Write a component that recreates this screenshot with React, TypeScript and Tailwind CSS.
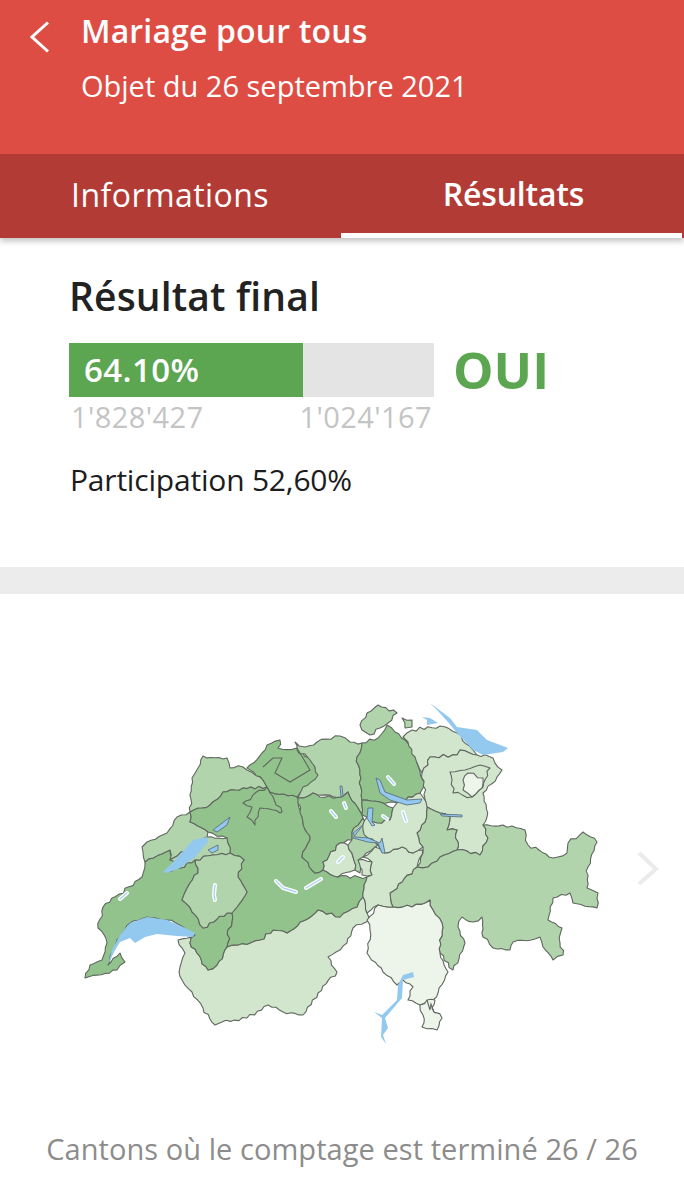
const DARK = '#93c38d';
const MID = '#b2d4ac';
const LIGHT = '#d2e6cd';
const PALE = '#edf4ea';
const LAKE = '#93c9ee';

type Pt = [number, number];

// deterministic wobble so the shared borders of two cantons stay on top of each other
const wobble = (a: number, b: number, i: number) => {
    const v = Math.sin(a * 12.9898 + b * 78.233 + i * 37.719) * 43758.5453;
    return (v - Math.floor(v) - 0.5) * 3.4;
};

const rough = (pts: Pt[]) => {
    const out: string[] = [];
    pts.forEach((p, idx) => {
        const q = pts[(idx + 1) % pts.length];
        out.push(`${p[0]},${p[1]}`);
        const swap = p[0] > q[0] || (p[0] === q[0] && p[1] > q[1]);
        const [s, e] = swap ? [q, p] : [p, q];
        const dx = e[0] - s[0];
        const dy = e[1] - s[1];
        const len = Math.hypot(dx, dy);
        const steps = Math.floor(len / 4);
        const mids: string[] = [];
        for (let i = 1; i < steps; i++) {
            const t = i / steps;
            const w = wobble(s[0] + s[1], e[0] + e[1], i);
            mids.push(`${(s[0] + dx * t - (dy / len) * w).toFixed(1)},${(s[1] + dy * t + (dx / len) * w).toFixed(1)}`);
        }
        out.push(...(swap ? mids.reverse() : mids));
    });
    return out.join(' ');
};

const cantons: { fill: string; pts: Pt[] }[] = [
    // Valais
    { fill: LIGHT, pts: [[178,940],[195,935],[190,943],[208,970],[217,965],[227,947],[238,945],[260,940],[273,930],[287,933],[318,910],[340,917],[357,907],[363,897],[367,913],[370,920],[353,928],[347,943],[328,957],[337,972],[318,993],[303,1015],[283,1012],[268,1005],[247,1018],[222,1022],[215,1025],[203,1008],[192,992],[182,980],[180,967],[185,953]] },
    // Vaud + Geneve
    { fill: DARK, pts: [[98,928],[103,907],[142,877],[145,862],[170,850],[175,862],[167,872],[180,868],[195,860],[198,873],[190,883],[182,900],[192,912],[203,928],[227,913],[232,913],[227,947],[217,965],[208,970],[190,943],[195,935],[183,927],[167,920],[147,917],[130,923],[117,940],[108,965],[120,953],[125,962],[117,970],[85,978],[90,965],[102,960],[107,943]] },
    // Neuchatel
    { fill: MID, pts: [[142,847],[147,842],[167,833],[177,817],[190,812],[190,822],[208,832],[207,837],[170,860],[170,850],[145,862]] },
    // Jura
    { fill: MID, pts: [[192,778],[198,768],[203,756],[227,758],[230,768],[243,767],[263,780],[267,787],[243,788],[223,792],[210,805],[190,812]] },
    // Berne
    { fill: DARK, pts: [[190,812],[210,805],[223,792],[243,788],[267,787],[270,792],[297,797],[302,817],[310,840],[302,857],[315,873],[323,870],[338,877],[367,877],[363,897],[357,907],[340,917],[318,910],[287,933],[273,930],[260,940],[238,945],[227,947],[232,913],[237,907],[247,892],[238,877],[244,860],[230,853],[227,838],[208,832],[190,822]] },
    // Broye, between the lakes
    { fill: MID, pts: [[207,837],[227,838],[230,853],[213,855],[195,860],[180,868],[170,860]] },
    // Fribourg
    { fill: MID, pts: [[182,900],[190,883],[198,873],[195,860],[213,855],[230,853],[244,860],[238,877],[247,892],[237,907],[232,913],[227,913],[203,928],[192,912]] },
    // Bale + Soleure
    { fill: DARK, pts: [[247,768],[262,753],[267,745],[280,740],[278,748],[297,748],[303,752],[318,772],[318,778],[300,793],[297,797],[270,792],[267,787],[263,780]] },
    { fill: DARK, pts: [[267,787],[243,803],[252,807],[247,817],[255,825],[260,808],[280,813],[282,812],[270,793]] },
    // Argovie
    { fill: MID, pts: [[295,742],[305,747],[317,742],[340,736],[350,742],[362,743],[357,757],[362,800],[362,815],[348,792],[342,797],[313,793],[298,798],[303,787],[318,775],[310,760],[297,750]] },
    // Lucerne
    { fill: DARK, pts: [[298,798],[313,793],[320,797],[342,797],[348,792],[362,815],[363,818],[352,832],[352,840],[340,843],[323,862],[323,870],[315,873],[302,857],[310,840],[302,817]] },
    // Obwald
    { fill: LIGHT, pts: [[323,870],[323,862],[340,843],[348,845],[353,857],[355,870],[338,877]] },
    { fill: LIGHT, pts: [[358,860],[372,862],[372,875],[362,875]] },
    // Nidwald
    { fill: MID, pts: [[352,832],[363,818],[368,838],[378,845],[363,857],[358,860],[360,873],[355,870],[353,857],[348,845],[352,840]] },
    // Zurich + Zoug
    { fill: DARK, pts: [[357,757],[362,743],[378,738],[387,725],[395,732],[405,740],[415,750],[417,763],[425,783],[420,793],[397,803],[380,802],[362,800]] },
    { fill: DARK, pts: [[362,800],[380,802],[393,808],[390,820],[377,823],[367,817],[362,815]] },
    // Schaffhouse
    { fill: MID, pts: [[360,725],[367,713],[378,705],[397,713],[388,723],[380,728],[370,735],[362,730]] },
    { fill: MID, pts: [[402,718],[412,720],[412,727],[405,728]] },
    // Thurgovie
    { fill: LIGHT, pts: [[403,737],[412,730],[440,726],[457,733],[473,750],[477,755],[460,750],[457,755],[430,757],[428,765],[422,773],[415,757],[408,742]] },
    // Saint-Gall
    { fill: LIGHT, pts: [[422,773],[428,765],[430,757],[457,755],[460,750],[477,755],[493,758],[502,770],[497,777],[483,793],[487,817],[483,825],[488,838],[480,855],[457,850],[457,830],[447,830],[450,817],[440,813],[427,807]] },
    // Appenzell
    { fill: LIGHT, pts: [[450,772],[465,770],[480,765],[490,768],[483,787],[472,797],[453,793],[452,780]] },
    { fill: PALE, pts: [[463,780],[468,773],[483,778],[482,788],[472,797],[463,790]] },
    // Glaris
    { fill: MID, pts: [[427,807],[440,813],[450,817],[447,830],[457,830],[457,850],[440,857],[428,867],[417,867],[423,853],[423,847],[417,833],[425,822]] },
    // Grisons
    { fill: MID, pts: [[483,825],[503,825],[525,830],[528,845],[553,858],[567,853],[568,843],[583,832],[597,842],[588,867],[587,888],[598,893],[597,908],[573,903],[570,893],[553,898],[548,920],[562,928],[560,943],[563,955],[553,960],[543,947],[540,937],[513,942],[510,950],[493,948],[483,937],[482,917],[473,922],[462,917],[458,927],[465,943],[453,970],[440,953],[442,923],[433,910],[430,900],[412,907],[393,907],[390,893],[402,882],[417,867],[428,867],[440,857],[457,850],[480,855],[488,838]] },
    // Uri
    { fill: LIGHT, pts: [[363,857],[375,847],[385,853],[402,847],[413,853],[423,850],[417,867],[402,882],[390,893],[393,907],[378,905],[367,913],[363,897],[367,877],[372,875],[372,862]] },
    // Schwyz
    { fill: LIGHT, pts: [[367,817],[377,823],[390,820],[393,808],[397,803],[420,793],[423,797],[427,807],[425,822],[417,833],[423,847],[413,853],[402,847],[385,853],[378,845],[368,838],[363,830]] },
    // Tessin
    { fill: PALE, pts: [[367,920],[378,905],[393,907],[412,907],[430,900],[433,910],[442,923],[440,953],[448,972],[433,1000],[420,1005],[408,1000],[413,987],[403,980],[397,985],[383,972],[367,953],[370,930]] },
    { fill: PALE, pts: [[427,1000],[435,1000],[432,1008],[442,1018],[437,1030],[422,1027],[423,1015],[420,1005]] },
];

// inner borders of the Bale and Soleure pieces
const innerBorders: string[] = [
    '273,758 282,758 275,773 290,782 310,770 300,753 297,748',
    '263,767 273,758',
    '427,1000 430,1010 431,1004 434,1012',
];

// lakes with a dark outline sit inside a canton, the others are just blue
const openLakes: Pt[][] = [
    [[108,965],[112,950],[120,935],[130,923],[147,917],[167,920],[183,927],[195,933],[193,937],[177,936],[157,934],[145,937],[135,943],[130,938],[120,942],[115,950]],
    [[163,872],[177,858],[193,840],[207,837],[208,842],[195,857],[180,868],[167,873]],
    [[430,703],[450,718],[457,727],[477,730],[487,740],[508,748],[503,752],[483,755],[473,750],[457,733],[448,722],[437,710]],
    [[422,717],[430,718],[438,723],[427,725],[427,720]],
    [[398,985],[403,975],[413,972],[414,977],[403,980],[402,998],[385,1018],[388,1028],[383,1035],[386,1044],[381,1037],[382,1018],[374,1012],[382,1015],[397,1000]],
];

const outlinedLakes: Pt[][] = [
    [[213,830],[230,817],[227,825],[217,832]],
    [[208,850],[218,845],[218,850],[212,853]],
    [[340,786],[342,786],[343,796],[341,797]],
    [[376,778],[380,780],[385,792],[407,800],[422,799],[420,803],[407,805],[390,800],[380,793]],
    [[368,808],[373,808],[372,822],[375,825],[372,826],[367,818]],
    [[363,825],[353,833],[355,837],[368,838],[380,843],[382,838],[385,853],[382,853],[378,843],[368,842],[353,838]],
    [[440,814],[462,815],[462,817],[442,816]],
];

// small lakes drawn as a white halo round a blue line
const haloLakes: string[] = [
    '120,899 127,893',
    '215,885 214,895 215,900',
    '276,881 283,888 296,892',
    '306,888 321,879',
    '331,811 336,817',
    '344,803 346,808',
    '338,862 343,857',
    '388,777 394,784',
    '403,812 406,821',
    '383,816 387,819',
];

const SwissMap = () => (
    <svg viewBox="0 690 684 370" className="block h-[370px] w-[684px]">
        {cantons.map((c, i) => (
            <polygon key={i} points={rough(c.pts)} fill={c.fill} stroke="#5f675f" strokeWidth={1.1} strokeLinejoin="round" />
        ))}
        {innerBorders.map((pts, i) => (
            <polyline key={i} points={pts} fill="none" stroke="#5f675f" strokeWidth={1.1} />
        ))}
        {openLakes.map((pts, i) => (
            <polygon key={i} points={pts.map((p) => p.join(',')).join(' ')} fill={LAKE} />
        ))}
        {outlinedLakes.map((pts, i) => (
            <polygon key={i} points={pts.map((p) => p.join(',')).join(' ')} fill={LAKE} stroke="#5f6f80" strokeWidth={0.9} />
        ))}
        {haloLakes.map((pts, i) => (
            <g key={i} fill="none" strokeLinecap="round">
                <polyline points={pts} stroke="#ffffff" strokeWidth={4} />
                <polyline points={pts} stroke="#a9d3f0" strokeWidth={1.4} />
            </g>
        ))}
        <polyline points="639,853 656,869 639,884" fill="none" stroke="#ebebeb" strokeWidth={4} />
    </svg>
);

const App = () => {
    return (
        <div className="h-[1200px] w-[684px] overflow-hidden bg-white font-['Open_Sans',sans-serif]">
            <div className="relative z-10 shadow-[0_3px_6px_rgba(0,0,0,0.25)]">
                <div className="flex h-[154px] items-start bg-[#de4d44] text-white">
                    <svg viewBox="0 0 20 32" className="ml-[30px] mt-[21px] h-[32px] w-[20px]">
                        <polyline points="18,1.5 2,16 18,30.5" fill="none" stroke="#ffffff" strokeWidth={3} />
                    </svg>
                    <div className="ml-[31px] flex flex-col">
                        <p className="mt-[11px] text-[32px] leading-[40px] font-semibold tracking-[0.15px]">Mariage pour tous</p>
                        <p className="mt-[15px] text-[29px] leading-[40px]">Objet du 26 septembre 2021</p>
                    </div>
                </div>
                <div className="flex h-[84px] bg-[#b23c35] text-[32px] text-white">
                    <div className="flex w-[341px] items-center pb-[3px] pl-[71px] tracking-[0.45px]">Informations</div>
                    <div className="flex w-[341px] items-center justify-center border-b-[5px] border-white pl-[4px] font-semibold tracking-[-0.2px]">
                        Résultats
                    </div>
                </div>
            </div>

            <div className="h-[329px] pl-[69px]">
                <p className="pt-[33px] text-[39px] leading-[50px] font-semibold tracking-[0.15px] text-[#222222]">Résultat final</p>
                <div className="mt-[22px] flex items-center">
                    <div className="flex h-[54px] w-[365px] bg-[#e4e4e4]">
                        <div className="flex w-[234px] items-center bg-[#5ca651] pl-[15px] text-[33px] font-semibold tracking-[0.4px] text-white">
                            64.10%
                        </div>
                    </div>
                    <p className="ml-[19px] -translate-y-px text-[51px] leading-[54px] font-bold text-[#5ca651]">OUI</p>
                </div>
                <div className="flex w-[365px] justify-between px-[2px] text-[29px] leading-[40px] tracking-[0.4px] text-[#c4c4c4]">
                    <span>1'828'427</span>
                    <span>1'024'167</span>
                </div>
                <p className="mt-[23px] pl-[1px] text-[30px] leading-[40px] tracking-[-0.2px] text-[#1c1c1c]">Participation 52,60%</p>
            </div>

            <div className="h-[27px] bg-[#ececec]" />

            <div className="pt-[96px]">
                <SwissMap />
            </div>

            <p className="mt-[69px] text-center text-[29px] leading-[40px] tracking-[0.06px] text-[#8c8c8c]">
                Cantons où le comptage est terminé 26 / 26
            </p>
        </div>
    );
};

export default App;
